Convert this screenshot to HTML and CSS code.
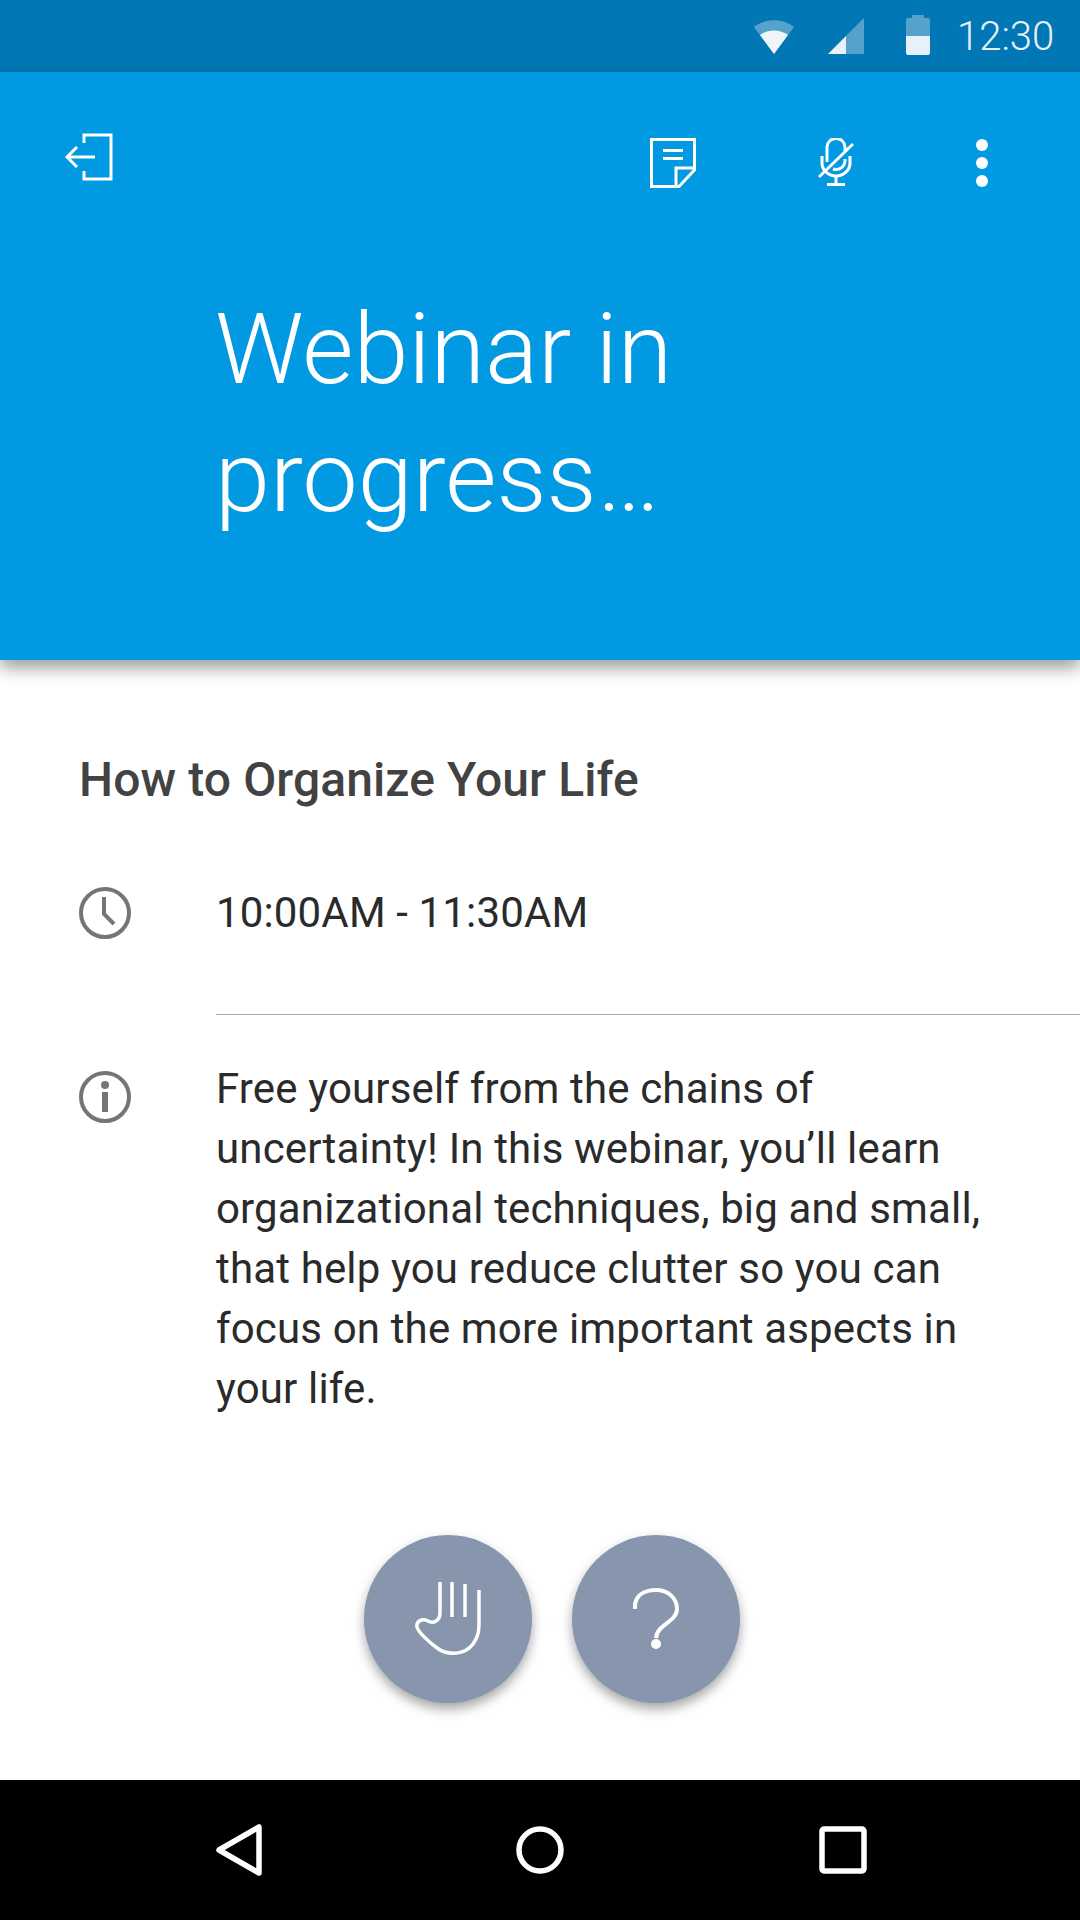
FILE: index.html
```html
<!DOCTYPE html>
<html lang="en">

<head>
    <meta charset="UTF-8">
    <meta name="viewport" content="width=device-width, initial-scale=1.0">
    <title>Webinar in progress</title>
    <link rel="stylesheet" href="styles.css">
</head>

<body>
    <div class="status">
        <svg class="s-wifi" width="40" height="36" viewBox="0 0 40 36">
            <path d="M0 9C11 0 29 0 40 9L20 36Z" fill="#fff" fill-opacity=".33" />
            <path d="M6 17C14 11 26 11 34 17L20 36Z" fill="#fff" fill-opacity=".9" />
        </svg>
        <svg class="s-signal" width="36" height="36" viewBox="0 0 36 36">
            <path d="M36 0V36H18V18Z" fill="#fff" fill-opacity=".33" />
            <path d="M0 36L18 18V36Z" fill="#fff" fill-opacity=".9" />
        </svg>
        <svg class="s-batt" width="24" height="40" viewBox="0 0 24 40">
            <path d="M6 0H18V3H22Q24 3 24 5V21H0V5Q0 3 2 3H6Z" fill="#fff" fill-opacity=".33" />
            <path d="M0 21H24V38Q24 40 22 40H2Q0 40 0 38Z" fill="#fff" fill-opacity=".9" />
        </svg>
        <span class="clock">12:30</span>
    </div>

    <header class="top">
        <div class="tools">
            <svg class="t-exit" width="50" height="50" viewBox="0 0 50 50" fill="none" stroke="#fff" stroke-width="3">
                <path d="M20 11V3H47V47H20V39" />
                <path d="M31 25H4M13 15L3 25L13 35" />
            </svg>
            <svg class="t-note" width="46" height="50" viewBox="0 0 46 50" fill="none" stroke="#fff" stroke-width="3">
                <path d="M1.500 1.500H44.500V32L29 48.500H1.500Z" />
                <path d="M13 12.500H33M13 20.500H33" />
                <path d="M26 48V30H44" />
            </svg>
            <svg class="t-mic" width="36" height="50" viewBox="0 0 36 50" fill="none" stroke="#fff" stroke-width="3">
                <path d="M9 24V9A9 8.500 0 0 1 27 9V13M27 21V23A9 9 0 0 1 15 31" />
                <path d="M4 18V25A14 13 0 0 0 32 25V18" />
                <path d="M18 38V47M9 46.500H27" />
                <path d="M1 39L35 6" />
            </svg>
            <div class="t-dots"><i></i><i></i><i></i></div>
        </div>
        <h1>Webinar in<br>progress…</h1>
    </header>

    <main class="content">
        <h2>How to Organize Your Life</h2>
        <div class="row row-time">
            <svg class="ic" width="52" height="52" viewBox="0 0 52 52" fill="none" stroke="#757575" stroke-width="4">
                <circle cx="26" cy="26" r="24" />
                <path d="M25 10V27L35 37" />
            </svg>
            <p>10:00AM - 11:30AM</p>
        </div>
        <div class="line"></div>
        <div class="row row-info">
            <svg class="ic" width="52" height="52" viewBox="0 0 52 52" fill="none" stroke="#757575" stroke-width="4">
                <circle cx="26" cy="26" r="24" />
                <circle cx="26" cy="14" r="4" fill="#757575" stroke="none" />
                <path d="M26 21V41" stroke-width="6" />
            </svg>
            <p>Free yourself from the chains of uncertainty! In this webinar, you’ll learn organizational techniques, big and small, that help you reduce clutter so you can focus on the more important aspects in your life.</p>
        </div>
        <div class="actions">
            <button class="fab">
                <svg class="hand" width="70" height="74" viewBox="0 0 70 74" fill="none" stroke="#fff" stroke-width="3.500">
                    <path d="M25 0V31C25 39 18 42 13 39C7 36 1 39 2 45C3 50 14 60 22 66C33 74 50 73 58 62C63 55 64 50 64 40V8" />
                    <path d="M37 0V35M50 2V35" />
                </svg>
            </button>
            <button class="fab">
                <svg width="46" height="62" viewBox="0 0 46 62" fill="none" stroke="#fff" stroke-width="4">
                    <path d="M2 21V16C4 6 13 2 23 2C35 2 44 10 44 21C44 34 24 36 23 50" />
                    <circle cx="23" cy="56" r="5" fill="#fff" stroke="none" />
                </svg>
            </button>
        </div>
    </main>

    <nav class="nav">
        <svg class="n-back" width="46" height="52" viewBox="0 0 46 52" fill="none" stroke="#fff" stroke-width="5.500" stroke-linejoin="round">
            <path d="M3 26L43 3V49Z" />
        </svg>
        <svg class="n-home" width="48" height="48" viewBox="0 0 48 48" fill="none" stroke="#fff" stroke-width="5.500">
            <circle cx="24" cy="24" r="21" />
        </svg>
        <svg class="n-recent" width="48" height="48" viewBox="0 0 48 48" fill="none" stroke="#fff" stroke-width="5.500" stroke-linejoin="round">
            <rect x="3" y="3" width="42" height="42" rx="2" />
        </svg>
    </nav>
</body>

</html>
```

FILE: styles.css
```css
* {
    padding: 0;
    margin: 0;
    box-sizing: border-box;
}

body {
    width: 1080px;
    height: 1920px;
    overflow: hidden;
    display: flex;
    flex-direction: column;
    background: #fff;
    font-family: Roboto, sans-serif;
}

svg {
    display: block;
    flex: none;
}

.status {
    height: 72px;
    display: flex;
    align-items: center;
    background: #0277b5;
    padding-left: 754px;
}

.s-signal {
    margin-left: 34px;
}

.s-batt {
    margin-left: 42px;
    margin-top: -2px;
}

.clock {
    margin-left: 27px;
    font-size: 40px;
    font-weight: 300;
    color: #e6f1f7;
}

.top {
    height: 588px;
    background: #0199e2;
    box-shadow: 0 8px 16px rgba(0, 0, 0, .38);
    position: relative;
    color: #fff;
}

.tools {
    display: flex;
    align-items: flex-start;
    padding: 60px 0 0 64px;
}

.t-note {
    margin: 6px 0 0 536px;
}

.t-mic {
    margin: 6px 0 0 122px;
}

.t-dots {
    margin: 7px 0 0 122px;
    display: flex;
    flex-direction: column;
    gap: 6px;
}

.t-dots i {
    width: 12px;
    height: 12px;
    border-radius: 50%;
    background: #fff;
}

h1 {
    margin: 97px 0 0 215px;
    font-size: 99px;
    line-height: 128px;
    font-weight: 300;
}

.content {
    flex: 1;
    padding-top: 92px;
    color: #2a2a2a;
}

h2 {
    margin-left: 79px;
    font-size: 48px;
    line-height: 56px;
    font-weight: 500;
    letter-spacing: .1px;
    color: #424242;
}

.row {
    display: flex;
    padding-left: 79px;
}

.row p {
    margin-left: 85px;
    width: 780px;
    font-size: 42px;
    line-height: 60px;
    letter-spacing: .15px;
}

.row-time {
    margin-top: 75px;
    align-items: center;
}

.line {
    margin: 71px 0 0 216px;
    height: 1px;
    background: #aaa;
}

.row-info {
    margin-top: 44px;
}

.row-info .ic {
    margin-top: 12px;
}

.actions {
    margin-top: 116px;
    display: flex;
    justify-content: center;
    gap: 40px;
    padding-left: 24px;
}

.fab {
    width: 168px;
    height: 168px;
    border: 0;
    border-radius: 50%;
    background: #8796ad;
    box-shadow: 0 6px 12px rgba(0, 0, 0, .35);
    display: flex;
    align-items: center;
    justify-content: center;
}

.hand {
    margin-left: 4px;
}

.nav {
    height: 140px;
    background: #000;
    display: flex;
    align-items: center;
    padding-left: 216px;
}

.n-home {
    margin-left: 254px;
}

.n-recent {
    margin-left: 255px;
}
```
